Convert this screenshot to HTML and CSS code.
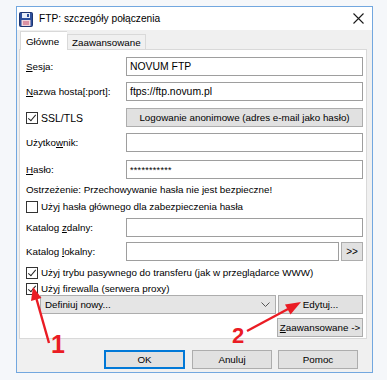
FILE: index.html
```html
<!DOCTYPE html>
<html lang="pl">
<head>
<meta charset="utf-8">
<title>FTP: szczegóły połączenia</title>
<link rel="stylesheet" href="styles.css">
</head>
<body>
<div class="desktop">
  <div class="window">
    <div class="titlebar">
      <svg class="appicon" width="14" height="15" viewBox="0 0 14 15">
        <rect x="0.5" y="0.5" width="13" height="14" rx="1" fill="#2d4f9b" stroke="#1d3570"/>
        <rect x="3" y="1" width="8" height="5" fill="#e8eef8"/>
        <rect x="8" y="2" width="2" height="3" fill="#2d4f9b"/>
        <rect x="2.5" y="8" width="9" height="6" fill="#f2d6dc"/>
        <rect x="4" y="9.5" width="6" height="1" fill="#c44d6a"/>
        <rect x="4" y="11.5" width="6" height="1" fill="#c44d6a"/>
      </svg>
      <span class="title">FTP: szczegóły połączenia</span>
      <svg class="close" width="11" height="11" viewBox="0 0 11 11">
        <path d="M0.5 0.5 L10.5 10.5 M10.5 0.5 L0.5 10.5" stroke="#1a1a1a" stroke-width="1.1"/>
      </svg>
    </div>
    <div class="tabs">
      <div class="tab active">Główne</div>
      <div class="tab">Zaawansowane</div>
    </div>
    <div class="panel">
      <div class="row row-sesja">
        <span class="lbl"><u>S</u>esja:</span>
        <div class="field">NOVUM FTP</div>
      </div>
      <div class="row row-host">
        <span class="lbl"><u>N</u>azwa hosta[:port]:</span>
        <div class="field">ftps://ftp.novum.pl</div>
      </div>
      <div class="row row-ssl">
        <span class="lbl check-lbl"><span class="cb checked"></span>SSL/TLS</span>
        <div class="btn wide">Logowanie anonimowe (adres e-mail jako hasło)</div>
      </div>
      <div class="row row-user">
        <span class="lbl">Użytko<u>w</u>nik:</span>
        <div class="field"></div>
      </div>
      <div class="row row-pass">
        <span class="lbl"><u>H</u>asło:</span>
        <div class="field pass">***********</div>
      </div>
      <div class="textrow row-warn">Ostrzeżenie: Przechowywanie hasła nie jest bezpieczne!</div>
      <div class="checkrow row-master"><span class="cb"></span>Użyj hasła głównego dla zabezpieczenia hasła</div>
      <div class="row row-remote">
        <span class="lbl">Katalog <u>z</u>dalny:</span>
        <div class="field"></div>
      </div>
      <div class="row row-local">
        <span class="lbl">Katalog <u>l</u>okalny:</span>
        <div class="field short"></div>
        <div class="btn browse">&gt;&gt;</div>
      </div>
      <div class="checkrow row-passive"><span class="cb checked"></span>Użyj trybu pasywnego do transferu (jak w przeglądarce WWW)</div>
      <div class="checkrow row-firewall"><span class="cb checked"></span>Użyj firewalla (serwera proxy)</div>
      <div class="row row-proxy">
        <div class="combo">
          <span>Definiuj nowy...</span>
          <svg width="9" height="5" viewBox="0 0 9 5"><path d="M0.5 0.5 L4.5 4.5 L8.5 0.5" fill="none" stroke="#555" stroke-width="1"/></svg>
        </div>
        <div class="btn edit">Edytuj...</div>
      </div>
      <div class="row row-adv">
        <div class="btn adv"><u>Z</u>aawansowane -&gt;</div>
      </div>
    </div>
    <div class="footer">
      <div class="btn dlg default">OK</div>
      <div class="btn dlg cancel">Anuluj</div>
      <div class="btn dlg help">Pomoc</div>
    </div>
  </div>
  <svg class="annot" width="387" height="380" viewBox="0 0 387 380">
    <path d="M49 343 L36.5 299" stroke="#ea1c24" stroke-width="2.4" fill="none"/>
    <polygon points="33,287 41.5,298 31,301" fill="#ea1c24"/>
    <text x="51" y="353" class="num n1">1</text>
    <path d="M247 331 L288 309" stroke="#ea1c24" stroke-width="2.4" fill="none"/>
    <polygon points="301,302 290.5,314.5 285,304.5" fill="#ea1c24"/>
    <text x="232" y="343" class="num n2">2</text>
  </svg>
</div>
</body>
</html>
```

FILE: styles.css
```css
html, body {
  margin: 0;
  padding: 0;
}
body {
  background: #f5f7fa;
  font-family: "Liberation Sans", Arial, sans-serif;
  font-size: 9.8px;
  color: #000;
}
.desktop {
  position: relative;
  width: 387px;
  height: 380px;
  padding: 6px 0 0 16px;
  box-sizing: border-box;
}
.window {
  width: 357px;
  height: 367px;
  box-sizing: border-box;
  border: 1px solid #72a7df;
  background: #f0f0f0;
  display: flex;
  flex-direction: column;
}
.titlebar {
  height: 23px;
  background: #fff;
  display: flex;
  align-items: center;
  padding-left: 2px;
}
.appicon {
  margin-top: 1px;
}
.title {
  font-size: 10.2px;
  margin-left: 6px;
  flex: 1;
}
.close {
  margin-right: 8px;
}
.tabs {
  height: 19px;
  display: flex;
  align-items: flex-end;
  padding-left: 3px;
}
.tab {
  height: 15px;
  box-sizing: border-box;
  padding: 0 4px;
  border: 1px solid #d9d9d9;
  border-bottom: none;
  background: #f0f0f0;
  display: flex;
  align-items: center;
  padding-top: 1px;
}
.tab.active {
  height: 19px;
  margin-bottom: -1px;
  background: #fff;
  position: relative;
  z-index: 1;
  padding: 0 5px;
  width: 47px;
  border-right: none;
}
.panel {
  width: 348px;
  height: 290px;
  box-sizing: border-box;
  margin-left: 2px;
  border: 1px solid #d9d9d9;
  background: #fff;
  padding: 7px 3px 0 6px;
  display: flex;
  flex-direction: column;
}
.row {
  display: flex;
  align-items: center;
  height: 19px;
  flex-shrink: 0;
}
.lbl {
  width: 100px;
  flex-shrink: 0;
  white-space: nowrap;
}
.check-lbl {
  display: flex;
  align-items: center;
  font-size: 10.5px;
}
.field {
  width: 237px;
  height: 19px;
  box-sizing: border-box;
  border: 1px solid #9e9e9e;
  background: #fff;
  padding-left: 3px;
  display: flex;
  align-items: center;
  font-size: 10.4px;
}
.field.pass {
  font-size: 9px;
  letter-spacing: 0.3px;
}
.field.short {
  width: 213px;
}
.btn {
  height: 19px;
  box-sizing: border-box;
  border: 1px solid #adadad;
  background: #e1e1e1;
  display: flex;
  align-items: center;
  justify-content: center;
  white-space: nowrap;
  flex-shrink: 0;
}
.btn.wide {
  width: 237px;
}
.btn.browse {
  width: 22px;
  margin-left: 2px;
  font-size: 10px;
}
.cb {
  width: 12px;
  height: 12px;
  box-sizing: border-box;
  border: 1px solid #333;
  background: #fff;
  margin-right: 3px;
  flex-shrink: 0;
  position: relative;
}
.cb.checked::after {
  content: "";
  position: absolute;
  left: 3px;
  top: 0px;
  width: 3px;
  height: 7px;
  border-right: 1.3px solid #222;
  border-bottom: 1.3px solid #222;
  transform: rotate(40deg);
}
.textrow {
  height: 14px;
  display: flex;
  align-items: center;
  flex-shrink: 0;
}
.checkrow {
  height: 13px;
  display: flex;
  align-items: center;
  flex-shrink: 0;
  white-space: nowrap;
}
.row-host { margin-top: 6px; }
.row-ssl { margin-top: 7px; }
.row-user { margin-top: 6px; }
.row-pass { margin-top: 8px; }
.row-warn { margin-top: 3px; }
.row-master { margin-top: 4px; }
.row-remote { margin-top: 5px; }
.row-local { margin-top: 5px; }
.row-passive { margin-top: 5px; }
.row-firewall { margin-top: 3px; }
.row-proxy { margin-top: 0px; padding-left: 14px; }
.row-adv { margin-top: 4px; justify-content: flex-end; }
.combo {
  width: 236px;
  height: 19px;
  box-sizing: border-box;
  border: 1px solid #adadad;
  background: #e5e5e5;
  display: flex;
  align-items: center;
  justify-content: space-between;
  padding: 0 5px 0 4px;
}
.btn.edit {
  width: 85px;
  margin-left: 2px;
}
.btn.adv {
  width: 86px;
}
.footer {
  display: flex;
  justify-content: flex-end;
  padding-right: 14px;
  margin-top: 11px;
}
.btn.dlg {
  width: 80px;
}
.btn.default {
  width: 81px;
  border-color: #0078d7;
  box-shadow: inset 0 0 0 1px #0078d7;
}
.btn.cancel {
  margin-left: 7px;
}
.btn.help {
  margin-left: 6px;
}
.annot {
  position: absolute;
  left: 0;
  top: 0;
  pointer-events: none;
}
.num {
  font-family: "Liberation Sans", Arial, sans-serif;
  font-weight: bold;
  fill: #ea1c24;
}
.n1 { font-size: 25px; }
.n2 { font-size: 22px; }
```
